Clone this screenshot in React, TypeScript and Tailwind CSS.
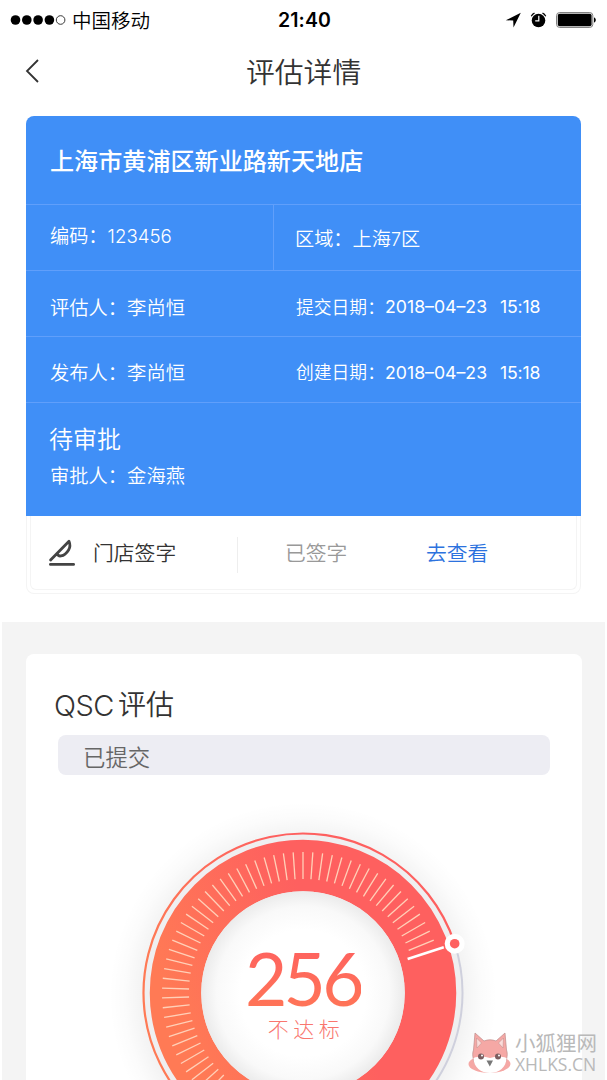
import type { ReactNode } from "react";

const CX = 163;
const CY = 163;
const TICKS = Array.from({ length: 60 }, (_, i) => -22 - i * 4);

function polar(r: number, deg: number) {
  const a = (deg * Math.PI) / 180;
  return { x: CX + r * Math.cos(a), y: CY + r * Math.sin(a) };
}

function StatusBar() {
  return (
    <div className="flex h-10 items-center text-black">
      <svg className="ml-[10px] h-3 w-14" viewBox="0 0 56 12">
        {[5.5, 16.8, 28.1, 39.4].map((x) => (
          <circle key={x} cx={x} cy="6" r="4.8" />
        ))}
        <circle cx="50.6" cy="6" r="4.3" fill="none" stroke="#222" strokeWidth="0.9" />
      </svg>
      <span className="ml-[6px] w-[206px] pt-px text-[19.5px] font-[350] leading-10">中国移动</span>
      <span className="w-[56px] text-[19.5px] font-semibold leading-10 tracking-[0.1px]">21:40</span>
      <svg className="ml-[171px] h-5 w-[92px]" viewBox="505 10 92 20">
        <path d="M520.8 12.8 505.8 20.3l7.4.2.3 6.9z" />
        <circle cx="538.5" cy="20.5" r="6.8" />
        <path d="M531.3 16.2a7 7 0 0 1 3.2-3M542.5 13.2a7 7 0 0 1 3.2 3" fill="none" stroke="#000" strokeWidth="1.3" />
        <path d="M538.8 15.8v5h-3.6" fill="none" stroke="#fff" strokeWidth="1.2" />
        <rect x="556.6" y="12.6" width="36.2" height="14.8" rx="3" fill="none" stroke="#777" />
        <rect x="557.8" y="13.8" width="33.8" height="12.4" rx="1.8" />
        <path d="M594 17.5c2.4.4 2.4 4.6 0 5z" />
      </svg>
    </div>
  );
}

function Row({ left, right, h }: { left: ReactNode; right: ReactNode; h: string }) {
  return (
    <div className={`flex items-center border-t border-[#609ffb] text-[19.3px] ${h}`}>
      <div className="w-[246px] pl-[24px]">{left}</div>
      <div className="flex items-center pl-[24px]">{right}</div>
    </div>
  );
}

function DateCell({ label, date, time }: { label: string; date: string; time: string }) {
  return (
    <>
      <span className="w-[89px] whitespace-nowrap text-[17.8px]">{label}</span>
      <span className="-mt-px w-[115px] text-[17.7px] font-normal">{date}</span>
      <span className="-mt-px text-[17.7px] font-normal tracking-[-0.2px]">{time}</span>
    </>
  );
}

function SignIcon() {
  return (
    <svg className="h-7 w-7" viewBox="0 0 28 28" fill="none" stroke="#444" strokeWidth="2.8" strokeLinecap="round">
      <path d="M2.4 25.4h23.2" />
      <path d="M2.6 21 21 2.200c1.400 3.300 1.300 6-.4 8.700-2.200 3.600-4.700 5.500-7.600 6-1.800.3-3.300-.6-4-2.400" strokeLinejoin="round" />
    </svg>
  );
}

function Gauge() {
  const from = polar(110, -18);
  const to = polar(148, -18);
  const knob = polar(159.5, -18);
  const bottom = polar(159.5, 90);
  return (
    <div className="relative ml-[114px] mt-[55px] h-[326px] w-[326px]">
      <svg className="h-full w-full overflow-visible" viewBox="0 0 326 326">
        <defs>
          <linearGradient id="ring" gradientUnits="userSpaceOnUse" x1="40" y1="195" x2="190" y2="130">
            <stop offset="0" stopColor="#ff7a55" />
            <stop offset="1" stopColor="#fe605f" />
          </linearGradient>
          <radialGradient id="halo">
            <stop offset="0.82" stopColor="#000" stopOpacity="0.05" />
            <stop offset="0.92" stopColor="#000" stopOpacity="0.015" />
            <stop offset="1" stopColor="#000" stopOpacity="0" />
          </radialGradient>
          <radialGradient id="hole">
            <stop offset="0.62" stopColor="#fff" />
            <stop offset="0.85" stopColor="#f9f9f9" />
            <stop offset="1" stopColor="#ebebeb" />
          </radialGradient>
        </defs>
        <circle cx={CX} cy={CY + 3} r="194" fill="url(#halo)" />
        <circle cx={CX} cy={CY} r="160" fill="#efeff0" />
        <path
          d={`M${bottom.x} ${bottom.y}A159.5 159.5 0 1 1 ${knob.x} ${knob.y}`}
          fill="none"
          stroke="url(#ring)"
          strokeWidth="2.2"
        />
        <path
          d={`M${knob.x} ${knob.y}A159.5 159.5 0 0 1 ${bottom.x} ${bottom.y}`}
          fill="none"
          stroke="#cfd0dd"
          strokeWidth="2"
        />
        <circle cx={CX} cy={CY} r="127.5" fill="none" stroke="url(#ring)" strokeWidth="51.5" />
        <circle cx={CX} cy={CY} r="101.8" fill="url(#hole)" />
        {TICKS.map((deg) => {
          const a = polar(114, deg);
          const b = polar(141, deg);
          return <line key={deg} x1={a.x} y1={a.y} x2={b.x} y2={b.y} stroke="#ffd0b8" strokeWidth="1.3" />;
        })}
        <line x1={from.x} y1={from.y} x2={to.x} y2={to.y} stroke="#fff" strokeWidth="2.6" />
        <circle cx={knob.x} cy={knob.y} r="10" fill="#fff" />
        <circle cx={knob.x} cy={knob.y} r="4.8" fill="#fe605f" />
      </svg>
      <div className="absolute inset-x-0 top-[111px] flex flex-col items-center">
        <span className="bg-gradient-to-b from-[#fe605f] to-[#ff7656] bg-clip-text font-['Lato'] text-[73px] leading-[74px] tracking-[-3.6px] text-transparent">
          256
        </span>
        <span className="pl-[6px] text-[21px] font-light leading-[30px] tracking-[4.5px] text-[#f9766e]">不达标</span>
      </div>
    </div>
  );
}

function Watermark() {
  return (
    <div className="absolute left-[467px] top-[1030px] flex text-[#b9b9b9]">
      <svg className="h-[50px] w-[46px]" viewBox="0 0 46 50">
        <ellipse cx="22.5" cy="34" rx="21" ry="9" fill="#f5a8a5" />
        <path d="M6.5 20 8 3l9 8c4-1.6 8-1.6 12 0l9-8 1.5 17c2 5-.2 13-4.5 17-7 7-17 7-24 0-4.5-4-6.5-12-4.5-17z" fill="#f5a8a5" stroke="#bd8c8b" strokeWidth=".7" />
        <path d="m9.5 8 5 5-4.5 5zM36.5 8l-5 5 4.500 5z" fill="#fbdcda" stroke="#bd8c8b" strokeWidth=".5" />
        <path d="M6.5 28c5-2 11-2 16.500 0 5.500-2 11.500-2 16.500 0 0 9-7.500 15-16.500 15S6.500 37 6.500 28z" fill="#fff" />
        <circle cx="14" cy="26.5" r="3" fill="#7b5e60" />
        <circle cx="31" cy="26.5" r="3" fill="#7b5e60" />
        <circle cx="15" cy="25.5" r="1" fill="#fff" />
        <circle cx="32" cy="25.5" r="1" fill="#fff" />
        <path d="M19.5 30.5H26l-3.200 6z" fill="#777" />
      </svg>
      <div className="ml-[2px] whitespace-nowrap pt-px">
        <div className="text-[20.5px] leading-[25px]">小狐狸网</div>
        <div className="-mt-px font-['Open_Sans'] text-[17.5px] leading-[18px]">XHLKS.CN</div>
      </div>
    </div>
  );
}

export default function App() {
  return (
    <div className="relative h-[1080px] w-[607px] overflow-hidden bg-white font-['Inter','Noto_Sans_CJK_SC',sans-serif] text-[#333]">
      <StatusBar />
      <header className="flex h-[76px] items-start">
        <svg className="ml-6 mt-[19px] h-6 w-4" viewBox="0 0 16 24" fill="none" stroke="#333" strokeWidth="1.8">
          <path d="M14 1 3 12l11 11" />
        </svg>
        <h1 className="ml-[206px] mt-[11px] text-[28.8px] font-[350] leading-[44px]">评估详情</h1>
      </header>

      <section className="ml-[26px] w-[555px]">
        <div className="h-[400px] rounded-t-[8px] bg-[#408ff7] font-[350] text-white">
          <h2 className="h-[88px] pl-[24px] text-[24.1px] font-medium leading-[91px]">上海市黄浦区新业路新天地店</h2>
          <div className="flex h-[66px] border-t border-[#609ffb] text-[19.2px]">
            <div className="w-[248px] border-r border-[#609ffb] pl-[24px] leading-[62px]">
              编码：<span className="text-[18.7px]">123456</span>
            </div>
            <div className="pl-[21px] leading-[68px]">
              区域：上海<span className="text-[18px]">7</span>区
            </div>
          </div>
          <Row h="h-[66px] pt-[9px]" left="评估人：李尚恒" right={<DateCell label="提交日期：" date="2018–04–23" time="15:18" />} />
          <Row h="h-[66px] pt-[8px]" left="发布人：李尚恒" right={<DateCell label="创建日期：" date="2018–04–23" time="15:18" />} />
          <div className="h-[114px] border-t border-[#609ffb] pl-[23px] pt-[19px]">
            <p className="text-[24px] leading-[36px]">待审批</p>
            <p className="pl-px text-[19.3px] leading-[36px]">审批人：金海燕</p>
          </div>
        </div>
        <div className="h-[78px] rounded-b-[8px] border border-t-0 border-[#f4f4f4] px-[3px] pb-[3px]">
          <div className="flex h-full items-center rounded-b-[6px] border border-t-0 border-[#f4f4f4] text-[20.8px] font-[350]">
            <div className="ml-[17px] flex">
              <SignIcon />
            </div>
            <span className="ml-[17px] w-[144px] pt-[3px]">门店签字</span>
            <span className="mt-1 h-9 w-px bg-[#eee]" />
            <span className="ml-[47px] w-[141px] pt-[3px] text-[#999]">已签字</span>
            <a className="pt-[3px] text-[#2c72de]">去查看</a>
          </div>
        </div>
      </section>

      <main className="mx-[2px] mt-[28px] h-[458px] bg-[#f4f4f4] px-6 pt-[32px]">
        <section className="h-[440px] w-[556px] rounded-t-[8px] bg-white pt-[30px]">
          <h2 className="ml-[28px] flex h-[42px] text-[28px] font-[350] leading-[43px]">
            <span className="w-[64px] text-[29px] font-light tracking-[-0.6px]">QSC</span>
            <span>评估</span>
          </h2>
          <div className="ml-[32px] mt-[9px] h-[40px] w-[492px] rounded-[8px] bg-[#ededf3] pl-[25px] text-[22.4px] font-[350] leading-[45px] text-[#666]">
            已提交
          </div>
          <Gauge />
        </section>
      </main>
      <Watermark />
    </div>
  );
}
